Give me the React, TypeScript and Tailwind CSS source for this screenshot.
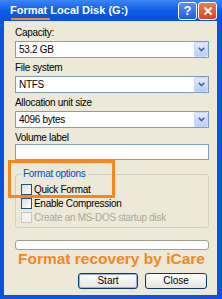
import React from "react";

const Chevron = () => (
  <svg width="7" height="5" viewBox="0 0 7 5">
    <path d="M0.7 0.7 L3.5 3.5 L6.3 0.7" stroke="#4d6185" strokeWidth="1.6" fill="none" />
  </svg>
);

function Select({ value }: { value: string }) {
  return (
    <div className="h-[17px] w-[194px] border border-[#7f9db9] bg-white flex items-center justify-between">
      <span className="pl-[3px] text-[10px] tracking-[-0.3px] text-black leading-none">{value}</span>
      <div className="h-[15px] w-[14px] rounded-[2px] bg-gradient-to-b from-[#e3ebfe] to-[#b9cdf8] border border-[#c8d6fb] flex items-center justify-center">
        <Chevron />
      </div>
    </div>
  );
}

function Label({ text, cls = "" }: { text: string; cls?: string }) {
  return <div className={`h-[12px] leading-[12px] text-[10px] tracking-[-0.3px] text-black ${cls}`}>{text}</div>;
}

function Check({ text, disabled = false }: { text: string; disabled?: boolean }) {
  return (
    <div className="h-[11px] flex items-center gap-[2px]">
      <div
        className={`w-[11px] h-[11px] border ${
          disabled ? "border-[#cac8bb] bg-[#f4f3ee]" : "border-[#1c5180] bg-gradient-to-br from-[#dcdcd7] to-white"
        }`}
      />
      <span className={`text-[10px] tracking-[-0.3px] leading-none ${disabled ? "text-[#aca899]" : "text-black"}`}>{text}</span>
    </div>
  );
}

export default function App() {
  return (
    <div className="relative w-[222px] h-[299px] bg-[#0b53d8] flex flex-col font-['Liberation_Sans',Arial,sans-serif] overflow-hidden">
      {/* Title bar */}
      <div className="h-[21px] flex items-center bg-gradient-to-b from-[#3d86f5] via-[#0c5ce6] to-[#0a50d8] pl-[10px] pr-[5px]">
        <span className="text-white font-bold text-[11px] leading-none">Format Local Disk (G:)</span>
        <div className="ml-auto flex gap-[1px]">
          <div className="w-[19px] h-[18px] rounded-[3px] border border-white bg-gradient-to-b from-[#5b8ef6] to-[#1f5ce0] flex items-center justify-center text-white font-bold text-[13px] leading-none">
            ?
          </div>
          <div className="w-[19px] h-[18px] rounded-[3px] border border-white bg-gradient-to-b from-[#ee7a55] to-[#d9451c] flex items-center justify-center">
            <svg width="10" height="10" viewBox="0 0 10 10">
              <path d="M1.5 1.5 L8.5 8.5 M8.5 1.5 L1.5 8.5" stroke="white" strokeWidth="2" />
            </svg>
          </div>
        </div>
      </div>

      {/* Body */}
      <div className="flex-1 ml-[4px] mr-[5px] mb-[4px] bg-[#ece9d8] pl-[11px] pr-[8px] pt-[6px] flex flex-col">
        <Label text="Capacity:" />
        <div className="mt-[2px]">
          <Select value="53.2 GB" />
        </div>
        <Label text="File system" cls="mt-[4px]" />
        <div className="mt-[2px]">
          <Select value="NTFS" />
        </div>
        <Label text="Allocation unit size" cls="mt-[4px]" />
        <div className="mt-[2px]">
          <Select value="4096 bytes" />
        </div>
        <Label text="Volume label" cls="mt-[4px]" />
        <div className="h-[16px] w-[194px] border border-[#7f9db9] bg-white" />

        {/* Group box */}
        <div className="relative mt-[14px] h-[54px] w-[194px] border border-[#d0d0bf] rounded-[3px] pt-[9px] pl-[5px] flex flex-col gap-[3px]">
          <span className="absolute left-[5px] top-[-7px] px-[2px] bg-[#ece9d8] text-[10px] tracking-[-0.3px] leading-[12px] text-[#0046d5]">
            Format options
          </span>
          <Check text="Quick Format" />
          <Check text="Enable Compression" />
          <Check text="Create an MS-DOS startup disk" disabled />
        </div>

        {/* Progress bar */}
        <div className="mt-[12px] h-[10px] w-[194px] border border-[#9d9d92] rounded-[3px] bg-white" />

        <div className="mt-[0px] pl-[3px] text-[#f7861f] font-bold text-[15.5px] leading-[18px]">Format recovery by iCare</div>

        <div className="mt-[5px] flex justify-end gap-[7px] pr-[2px]">
          <div className="w-[60px] h-[16px] rounded-[3px] border border-[#003c74] bg-gradient-to-b from-white to-[#e6e4dc] shadow-[inset_0_0_0_1px_#8fb3ee] flex items-center justify-center text-[10px] leading-none text-black">
            Start
          </div>
          <div className="w-[62px] h-[16px] rounded-[3px] border border-[#003c74] bg-gradient-to-b from-white to-[#e6e4dc] flex items-center justify-center text-[10px] leading-none text-black">
            Close
          </div>
        </div>
      </div>

      {/* Annotations */}
      <div className="absolute left-[11px] top-[18px] w-[39px] h-[2px] bg-[#f7861f]" />
      <div className="absolute left-[8px] top-[160px] w-[107px] h-[38px] border-[3px] border-[#f7861f]" />
    </div>
  );
}
